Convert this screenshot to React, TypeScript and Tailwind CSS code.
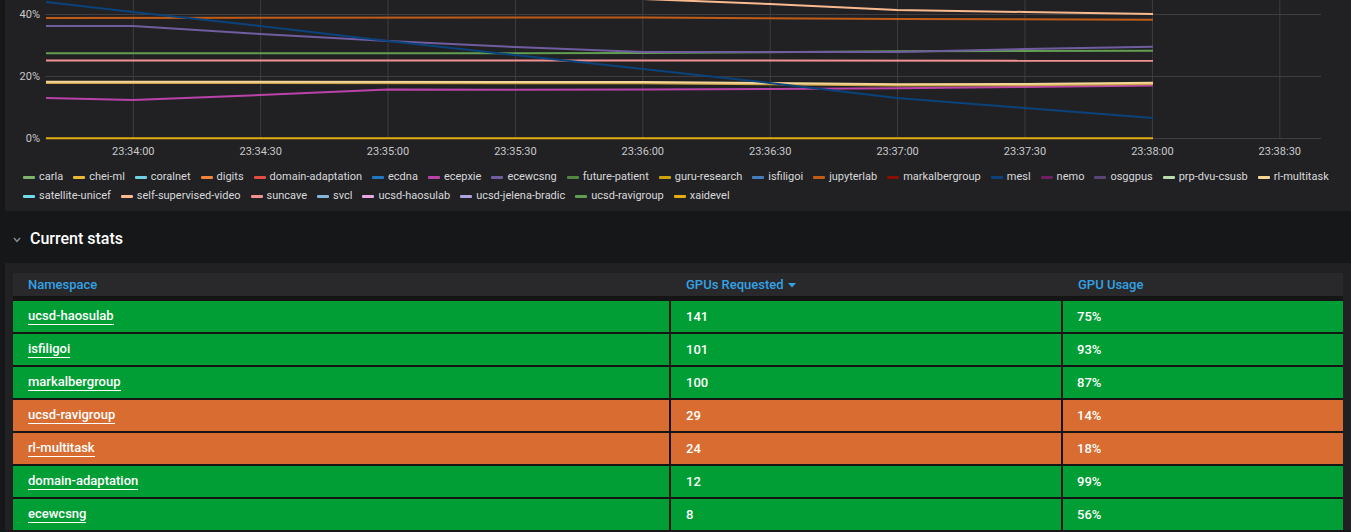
import React from "react";

const font = { fontFamily: "Roboto, 'Liberation Sans', sans-serif" };

const gridX = [133.3, 260.7, 388, 515.4, 642.8, 770.2, 897.6, 1025, 1152.4, 1279.8];
const timeLabels = [
  "23:34:00",
  "23:34:30",
  "23:35:00",
  "23:35:30",
  "23:36:00",
  "23:36:30",
  "23:37:00",
  "23:37:30",
  "23:38:00",
  "23:38:30",
];

const series: { color: string; pts: [number, number][] }[] = [
  { color: "#E5AC0E", pts: [[46, 138.3], [1153, 138.3]] },
  {
    color: "#BA43A9",
    pts: [[46, 98], [133, 100], [260, 95], [388, 89.5], [515, 89.7], [643, 89.5], [770, 89], [897, 88.3], [1025, 87], [1153, 85.5]],
  },
  {
    color: "#CCA34A",
    pts: [[46, 83], [643, 83.3], [770, 84.3], [897, 85.6], [1025, 85.3], [1153, 84]],
  },
  {
    color: "#F4D598",
    pts: [[46, 81.7], [643, 82], [770, 83], [897, 84.3], [1025, 84], [1153, 82.7]],
  },
  { color: "#F29191", pts: [[46, 60.4], [1153, 60.7]] },
  {
    color: "#629E51",
    pts: [[46, 53.3], [388, 53.3], [643, 53], [897, 51.3], [1153, 50.7]],
  },
  {
    color: "#705DA0",
    pts: [[46, 26], [133, 26], [260, 34], [388, 41], [515, 47], [643, 52], [770, 52], [897, 52], [1025, 49], [1153, 46.7]],
  },
  {
    color: "#C15C17",
    pts: [[46, 18], [643, 17.5], [900, 19], [1153, 19.7]],
  },
  {
    color: "#0A437C",
    pts: [[46, 2], [133, 12], [260, 26], [388, 41], [515, 55], [643, 69], [770, 83], [897, 98], [1025, 108], [1153, 118]],
  },
  {
    color: "#F9BA8F",
    pts: [[515, -14], [643, -1], [770, 4], [897, 10], [1025, 12], [1153, 14]],
  },
];

const legendRows: [string, string][][] = [
  [
    ["#7EB26D", "carla"],
    ["#EAB839", "chei-ml"],
    ["#6ED0E0", "coralnet"],
    ["#EF843C", "digits"],
    ["#E24D42", "domain-adaptation"],
    ["#1F78C1", "ecdna"],
    ["#BA43A9", "ecepxie"],
    ["#705DA0", "ecewcsng"],
    ["#508642", "future-patient"],
    ["#CCA300", "guru-research"],
    ["#447EBC", "isfiligoi"],
    ["#C15C17", "jupyterlab"],
    ["#890F02", "markalbergroup"],
    ["#0A437C", "mesl"],
    ["#6D1F62", "nemo"],
    ["#584477", "osggpus"],
    ["#B7DBAB", "prp-dvu-csusb"],
    ["#F4D598", "rl-multitask"],
  ],
  [
    ["#70DBED", "satellite-unicef"],
    ["#F9BA8F", "self-supervised-video"],
    ["#F29191", "suncave"],
    ["#82B5D8", "svcl"],
    ["#E5A8E2", "ucsd-haosulab"],
    ["#AEA2E0", "ucsd-jelena-bradic"],
    ["#629E51", "ucsd-ravigroup"],
    ["#E5AC0E", "xaidevel"],
  ],
];

const rows: { ns: string; gpus: string; usage: string; warn?: boolean }[] = [
  { ns: "ucsd-haosulab", gpus: "141", usage: "75%" },
  { ns: "isfiligoi", gpus: "101", usage: "93%" },
  { ns: "markalbergroup", gpus: "100", usage: "87%" },
  { ns: "ucsd-ravigroup", gpus: "29", usage: "14%", warn: true },
  { ns: "rl-multitask", gpus: "24", usage: "18%", warn: true },
  { ns: "domain-adaptation", gpus: "12", usage: "99%" },
  { ns: "ecewcsng", gpus: "8", usage: "56%" },
];

function Chart() {
  return (
    <svg width={1346} height={160} viewBox="5 0 1346 160" className="block">
      {[14.5, 76.5, 138.5].map((y) => (
        <line key={y} x1={45} x2={1321} y1={y} y2={y} stroke="#3e3e41" strokeWidth={1} />
      ))}
      {gridX.map((x) => (
        <line key={x} x1={x} x2={x} y1={0} y2={139} stroke="#3e3e41" strokeWidth={1} />
      ))}
      {series.map((s, i) => (
        <polyline
          key={i}
          points={s.pts.map((p) => p.join(",")).join(" ")}
          fill="none"
          stroke={s.color}
          strokeWidth={2}
          strokeLinejoin="round"
        />
      ))}
      <g fill="#c8c9ca" fontSize={11} style={font}>
        <text x={40} y={18} textAnchor="end">40%</text>
        <text x={40} y={80} textAnchor="end">20%</text>
        <text x={40} y={142} textAnchor="end">0%</text>
        {gridX.map((x, i) => (
          <text key={x} x={x} y={155} textAnchor="middle">
            {timeLabels[i]}
          </text>
        ))}
      </g>
    </svg>
  );
}

function Legend() {
  return (
    <div className="flex flex-col gap-[2px] pl-[18px] pt-[9px]">
      {legendRows.map((row, ri) => (
        <div key={ri} className="flex h-[17px] items-center text-[11px] text-[#d8d9da]">
          {row.map(([color, name]) => (
            <div key={name} className="mr-[10px] flex items-center">
              <span className="mr-[4px] h-[3px] w-[12px] rounded-[1px]" style={{ backgroundColor: color }} />
              <span>{name}</span>
            </div>
          ))}
        </div>
      ))}
    </div>
  );
}

function StatsTable() {
  return (
    <div className="ml-[5px] bg-[#212124] px-[8px] pt-[10px]">
      <div className="flex h-[23px] items-center bg-[#29292c] pt-[1px] text-[13px] font-medium text-[#33a2e5]">
        <div className="w-[658px] pl-[15px]">Namespace</div>
        <div className="flex w-[392px] items-center pl-[15px]">
          GPUs Requested
          <svg width="8" height="5" viewBox="0 0 8 5" className="ml-[4px]">
            <path d="M0 0 L8 0 L4 4.5 Z" fill="#33a2e5" />
          </svg>
        </div>
        <div className="flex-1 pl-[15px]">GPU Usage</div>
      </div>
      <div className="flex flex-col gap-[2px] bg-[#151516] pt-[5px]">
        {rows.map((r) => {
          const bg = r.warn ? "bg-[#d86c31]" : "bg-[#009e34]";
          return (
            <div key={r.ns} className="flex h-[31px] gap-[2px] text-[13px] font-medium text-white">
              <div className={`flex w-[656px] items-center pl-[15px] ${bg}`}>
                <span className="inline-block border-b border-white pb-[1px] leading-[15px]">{r.ns}</span>
              </div>
              <div className={`flex w-[390px] items-center pl-[15px] ${bg}`}>{r.gpus}</div>
              <div className={`flex flex-1 items-center pl-[14px] ${bg}`}>{r.usage}</div>
            </div>
          );
        })}
      </div>
    </div>
  );
}

export default function App() {
  return (
    <div className="h-[532px] w-[1351px] overflow-hidden bg-[#161719]" style={font}>
      <div className="ml-[5px] h-[211px] bg-[#212124]">
        <Chart />
        <Legend />
      </div>
      <div className="flex h-[52px] items-center pl-[13px] pt-[3px]">
        <svg width="8" height="6" viewBox="0 0 8 6" className="mr-[9px] mt-[3px]">
          <path d="M1 1 L4 4.5 L7 1" fill="none" stroke="#8e8e91" strokeWidth="1.4" />
        </svg>
        <span className="text-[16px] font-medium text-white">Current stats</span>
      </div>
      <StatsTable />
    </div>
  );
}
